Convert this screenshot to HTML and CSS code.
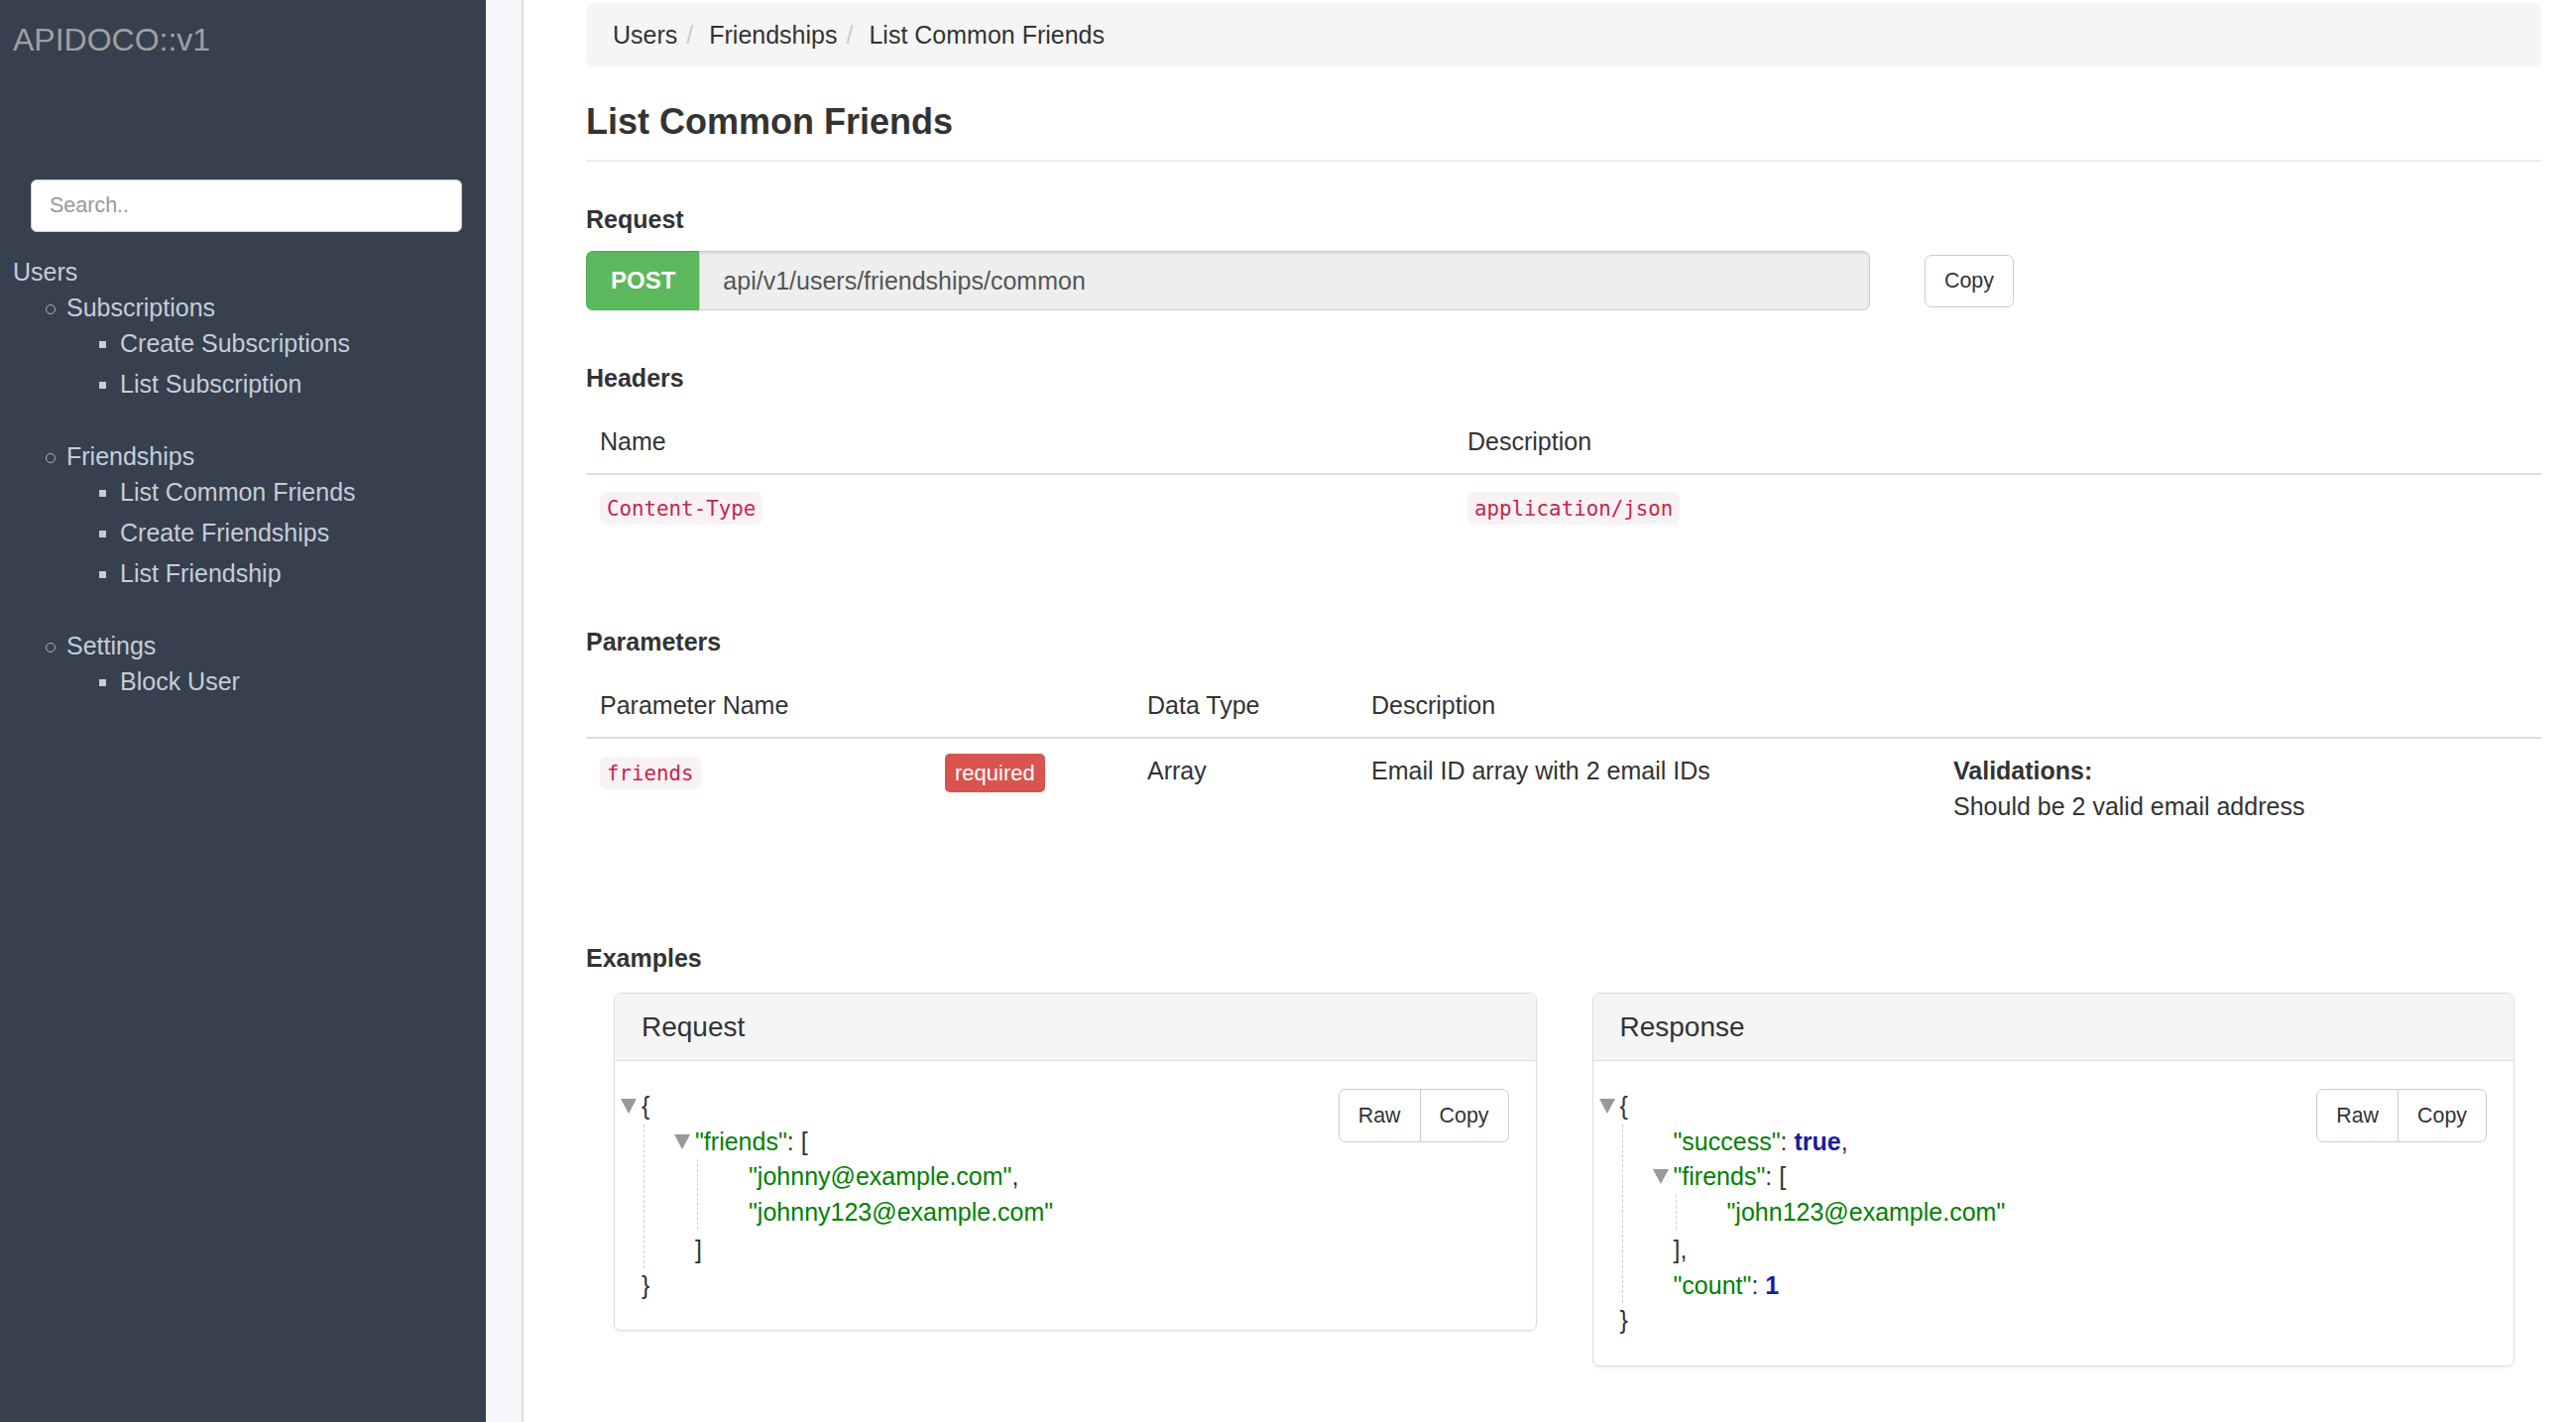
FILE: index.html
```html
<!DOCTYPE html>
<html lang="en">
<head>
<meta charset="utf-8">
<title>APIDOCO::v1 - List Common Friends</title>
<link rel="stylesheet" href="styles.css">
</head>
<body>
<div class="layout">
  <aside class="sidebar">
    <div class="brand">APIDOCO::v1</div>
    <input class="search" type="text" placeholder="Search..">
    <ul class="nav">
      <li>Users
        <ul class="nav-l2">
          <li>Subscriptions
            <ul class="nav-l3">
              <li>Create Subscriptions</li>
              <li>List Subscription</li>
            </ul>
          </li>
          <li>Friendships
            <ul class="nav-l3">
              <li>List Common Friends</li>
              <li>Create Friendships</li>
              <li>List Friendship</li>
            </ul>
          </li>
          <li>Settings
            <ul class="nav-l3">
              <li>Block User</li>
            </ul>
          </li>
        </ul>
      </li>
    </ul>
  </aside>
  <div class="gutter"></div>
  <main class="main">
    <ol class="crumbs">
      <li>Users</li>
      <li>Friendships</li>
      <li>List Common Friends</li>
    </ol>

    <h1 class="title">List Common Friends</h1>

    <h4 class="sec sec-request">Request</h4>
    <div class="req-row">
      <div class="url-group">
        <span class="method">POST</span>
        <div class="url">api/v1/users/friendships/common</div>
      </div>
      <button class="btn btn-copy">Copy</button>
    </div>

    <h4 class="sec sec-headers">Headers</h4>
    <table class="tbl">
      <colgroup><col class="c-hname"><col></colgroup>
      <thead>
        <tr><th>Name</th><th>Description</th></tr>
      </thead>
      <tbody>
        <tr><td><code>Content-Type</code></td><td><code>application/json</code></td></tr>
      </tbody>
    </table>

    <h4 class="sec sec-params">Parameters</h4>
    <table class="tbl">
      <colgroup><col class="c-pname"><col class="c-req"><col class="c-type"><col class="c-desc"><col></colgroup>
      <thead>
        <tr><th>Parameter Name</th><th></th><th>Data Type</th><th>Description</th><th></th></tr>
      </thead>
      <tbody>
        <tr>
          <td><code class="code-f">friends</code></td>
          <td><span class="label-req">required</span></td>
          <td>Array</td>
          <td>Email ID array with 2 email IDs</td>
          <td><strong>Validations:</strong><br>Should be 2 valid email address</td>
        </tr>
      </tbody>
    </table>

    <h4 class="sec sec-examples">Examples</h4>
    <div class="examples">
      <div class="panel">
        <div class="panel-head">Request</div>
        <div class="panel-body">
          <div class="btn-group"><button class="btn">Raw</button><button class="btn">Copy</button></div>
          <div class="json">
            <div class="jl"><span class="tog"></span>{</div>
            <div class="kids">
              <div class="jl"><span class="tog"></span><span class="s">"friends"</span>: [</div>
              <div class="kids">
                <div class="jl"><span class="s">"johnny@example.com"</span>,</div>
                <div class="jl"><span class="s">"johnny123@example.com"</span></div>
              </div>
              <div class="jl close-n">]</div>
            </div>
            <div class="jl">}</div>
          </div>
        </div>
      </div>
      <div class="panel">
        <div class="panel-head">Response</div>
        <div class="panel-body">
          <div class="btn-group"><button class="btn">Raw</button><button class="btn">Copy</button></div>
          <div class="json">
            <div class="jl"><span class="tog"></span>{</div>
            <div class="kids">
              <div class="jl"><span class="s">"success"</span>: <span class="b">true</span>,</div>
              <div class="jl"><span class="tog"></span><span class="s">"firends"</span>: [</div>
              <div class="kids">
                <div class="jl"><span class="s">"john123@example.com"</span></div>
              </div>
              <div class="jl close-n">],</div>
              <div class="jl"><span class="s">"count"</span>: <span class="b">1</span></div>
            </div>
            <div class="jl">}</div>
          </div>
        </div>
      </div>
    </div>
  </main>
</div>
</body>
</html>
```

FILE: styles.css
```css
* { box-sizing: border-box; }

html, body {
  margin: 0;
  padding: 0;
}

body {
  font-family: "Liberation Sans", Arial, sans-serif;
  color: #333;
  background: #fff;
}

.layout {
  display: flex;
  min-height: 1434px;
}

/* ---------- sidebar ---------- */
.sidebar {
  width: 490px;
  flex: none;
  background: #36404f;
  padding: 20px 0 0 13px;
}

.brand {
  font-size: 32px;
  line-height: 40px;
  color: #a0a0a0;
}

.search {
  display: block;
  margin: 121px 0 0 18px;
  width: 435px;
  height: 53px;
  border: 1px solid #ccc;
  border-radius: 6px;
  padding: 0 18px;
  font-family: "Liberation Sans", Arial, sans-serif;
  font-size: 21.5px;
  color: #555;
  background: #fff;
  outline: none;
}

.search::placeholder { color: #999; }

.nav {
  list-style: none;
  margin: 22px 0 0;
  padding: 0;
  font-size: 25px;
  line-height: 36px;
  color: #c6cdd7;
}

.nav-l2 {
  list-style: none;
  margin: 0;
  padding-left: 54px;
}

.nav-l2 > li { position: relative; }

.nav-l2 > li::before {
  content: "";
  position: absolute;
  left: -21px;
  top: 15px;
  width: 8px;
  height: 8px;
  border: 1.5px solid #aeb6c1;
  border-radius: 50%;
}

.nav-l3 {
  list-style: none;
  margin: 0 0 37px;
  padding-left: 54px;
}

.nav-l3 li { position: relative; }
.nav-l3 li + li { margin-top: 5px; }

.nav-l3 li::before {
  content: "";
  position: absolute;
  left: -21px;
  top: 16px;
  width: 7px;
  height: 7px;
  background: #c6cdd7;
}

.gutter {
  width: 38px;
  flex: none;
  background: #f5f7fa;
  border-right: 2px solid #dedede;
}

/* ---------- main ---------- */
.main {
  flex: 1;
  min-width: 0;
  padding: 3px 35px 0 63px;
  font-size: 25px;
  line-height: 36px;
}

.crumbs {
  display: flex;
  list-style: none;
  margin: 0;
  padding: 14px 27px;
  background: #f5f5f5;
  border-radius: 7px;
  color: #333;
}

.crumbs li + li::before {
  content: "/";
  color: #ccc;
  padding: 0 16px 0 9px;
}

.title {
  margin: 36px 0 0;
  font-size: 36px;
  line-height: 40px;
  font-weight: bold;
  padding-bottom: 18px;
  border-bottom: 2px solid #eee;
}

.sec {
  margin: 0;
  font-size: 25px;
  line-height: 36px;
  font-weight: bold;
}

.sec-request { margin-top: 40px; }
.sec-headers { margin-top: 50px; }
.sec-params { margin-top: 86px; }
.sec-examples { margin-top: 103px; }

.req-row {
  display: flex;
  align-items: center;
  margin-top: 14px;
}

.url-group {
  display: flex;
  width: 1295px;
  height: 60px;
}

.method {
  display: flex;
  align-items: center;
  background: #5cb85c;
  border: 1px solid #4cae4c;
  border-right: 0;
  border-radius: 7px 0 0 7px;
  color: #fff;
  font-weight: bold;
  font-size: 24px;
  padding: 0 24px;
}

.url {
  flex: 1;
  background: #eee;
  border: 1px solid #ccc;
  border-radius: 0 7px 7px 0;
  padding: 0 23px;
  font-size: 25px;
  line-height: 58px;
  color: #555;
  box-shadow: inset 0 2px 2px rgba(0, 0, 0, 0.075);
}

.btn {
  height: 53px;
  padding: 0 19px;
  font-family: "Liberation Sans", Arial, sans-serif;
  font-size: 21.4px;
  line-height: 51px;
  color: #333;
  background: #fff;
  border: 1px solid #ccc;
  border-radius: 7px;
}

.btn-copy { margin-left: 55px; }

/* tables */
.tbl {
  width: 100%;
  margin-top: 14px;
  border-collapse: separate;
  border-spacing: 0;
  table-layout: fixed;
}

.tbl th {
  text-align: left;
  font-weight: normal;
  padding: 14px;
  border-bottom: 2px solid #ddd;
  vertical-align: bottom;
}

.tbl td {
  padding: 14px;
  vertical-align: top;
}

.c-hname { width: 875px; }
.c-pname { width: 348px; }
.c-req { width: 204px; }
.c-type { width: 226px; }
.c-desc { width: 587px; }

code {
  display: inline-block;
  vertical-align: top;
  margin-top: 3px;
  font-family: "DejaVu Sans Mono", "Liberation Mono", monospace;
  font-size: 20.8px;
  line-height: 26px;
  padding: 3.5px 7px;
  color: #c7254e;
  background: #f9f2f4;
  border-radius: 7px;
}

.code-f { margin-top: 4px; }

.label-req {
  display: inline-block;
  vertical-align: top;
  margin: 1px 0 -4px;
  height: 39px;
  line-height: 39px;
  padding: 0 10px;
  font-size: 22px;
  color: #fff;
  background: #d9534f;
  border-radius: 5px;
}

/* examples */
.examples {
  display: flex;
  align-items: flex-start;
  gap: 56px;
  margin-top: 17px;
  padding: 0 27px 0 28px;
}

.panel {
  flex: 1;
  min-width: 0;
  background: #fff;
  border: 1px solid #ddd;
  border-radius: 7px;
  box-shadow: 0 2px 2px rgba(0, 0, 0, 0.05);
}

.panel-head {
  background: #f5f5f5;
  border-bottom: 1px solid #ddd;
  border-radius: 6px 6px 0 0;
  padding: 18px 27px;
  font-size: 28px;
  line-height: 31px;
}

.panel-body {
  padding: 28px 27px 27px;
}

.btn-group {
  float: right;
  display: flex;
}

.btn-group .btn {
  height: 54px;
  line-height: 52px;
  border-radius: 7px 0 0 7px;
}

.btn-group .btn + .btn {
  margin-left: -1px;
  border-radius: 0 7px 7px 0;
}

.json {
  font-size: 25px;
  line-height: 35.5px;
  color: #333;
}

.jl {
  position: relative;
  white-space: nowrap;
}

.tog {
  position: absolute;
  left: -21px;
  top: 10px;
  width: 0;
  height: 0;
  border-left: 8px solid transparent;
  border-right: 8px solid transparent;
  border-top: 15px solid #999;
}

.kids {
  margin-left: 2px;
  border-left: 1px dashed #ccc;
  padding-left: 51px;
}

.close-n { margin-top: 3px; }

.s { color: #008000; }

.b {
  color: #1a1aa6;
  font-weight: bold;
}
```
